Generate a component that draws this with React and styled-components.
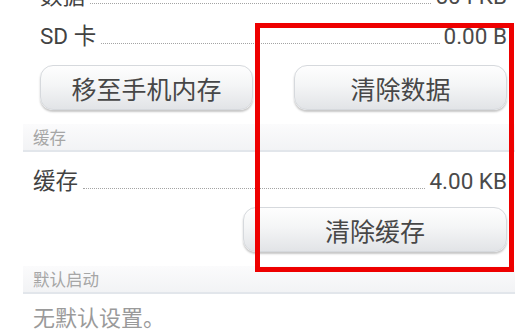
import React from "react";
import styled, { createGlobalStyle } from "styled-components";

const Global = createGlobalStyle`
  html, body { margin: 0; padding: 0; background: #ffffff; }
  body { overflow: hidden; font-family: Roboto, "Noto Sans CJK SC", sans-serif; }
`;

const Screen = styled.div`
  position: relative;
  width: 525px;
  height: 331px;
  overflow: hidden;
  background: #ffffff;
`;

const Content = styled.div`
  display: flex;
  flex-direction: column;
  margin-top: -17px;
  padding-left: 23px;
  width: 492px;
`;

const InfoRow = styled.div`
  display: flex;
  align-items: baseline;
  height: 26px;
  line-height: 26px;
  font-size: 22.5px;
  color: #424242;
  padding-left: ${(p) => p.$indent}px;
  padding-right: 8px;
  margin-top: ${(p) => p.$mt}px;
`;

const Label = styled.span`
  white-space: nowrap;
`;

const Leader = styled.span`
  flex: 1;
  height: 0;
  margin: 0 4px 0 5px;
  border-bottom: 1px dotted #a4a4a4;
`;

const Value = styled.span`
  white-space: nowrap;
  color: #4a4a4a;
`;

const ButtonRow = styled.div`
  display: flex;
  justify-content: ${(p) => (p.$end ? "flex-end" : "space-between")};
  padding-left: 17px;
  padding-right: 8px;
  margin-top: ${(p) => p.$mt}px;
`;

const Button = styled.button`
  width: ${(p) => p.$w}px;
  height: 45px;
  border: 1px solid #d6d9dd;
  border-radius: 13px;
  background: linear-gradient(#fefefe 0%, #f4f5f6 45%, #e2e4e7 100%);
  box-shadow: 0 2px 2px rgba(0, 0, 0, 0.22);
  font-family: Roboto, "Noto Sans CJK SC", sans-serif;
  font-size: 25px;
  color: #474747;
  padding: 0;
  display: flex;
  align-items: center;
  justify-content: center;
`;

const SectionHeader = styled.div`
  display: flex;
  align-items: center;
  box-sizing: border-box;
  height: 28px;
  margin-top: ${(p) => p.$mt}px;
  padding-left: 10px;
  background: linear-gradient(#fbfbfc, #f2f3f5);
  border-bottom: 2px solid #e2e6eb;
  font-size: 16.5px;
  color: #a6a6a6;
`;

const Note = styled.div`
  margin-top: 12px;
  padding-left: 10px;
  font-size: 22px;
  line-height: 26px;
  color: #9a9a9a;
`;

const Highlight = styled.div`
  position: absolute;
  left: 255px;
  top: 23px;
  width: 259px;
  height: 249px;
  box-sizing: border-box;
  border: 5px solid #ee0000;
  pointer-events: none;
`;

export default function App() {
  return (
    <Screen>
      <Global />
      <Content>
        <InfoRow $indent={17} $mt={0}>
          <Label>数据</Label>
          <Leader />
          <Value>504 KB</Value>
        </InfoRow>
        <InfoRow $indent={17} $mt={14}>
          <Label>SD 卡</Label>
          <Leader />
          <Value>0.00 B</Value>
        </InfoRow>
        <ButtonRow $mt={16}>
          <Button $w={213}>移至手机内存</Button>
          <Button $w={213}>清除数据</Button>
        </ButtonRow>
        <SectionHeader $mt={14}>缓存</SectionHeader>
        <InfoRow $indent={10} $mt={16}>
          <Label>缓存</Label>
          <Leader />
          <Value>4.00 KB</Value>
        </InfoRow>
        <ButtonRow $end $mt={13}>
          <Button $w={264}>清除缓存</Button>
        </ButtonRow>
        <SectionHeader $mt={14}>默认启动</SectionHeader>
        <Note>无默认设置。</Note>
      </Content>
      <Highlight />
    </Screen>
  );
}
